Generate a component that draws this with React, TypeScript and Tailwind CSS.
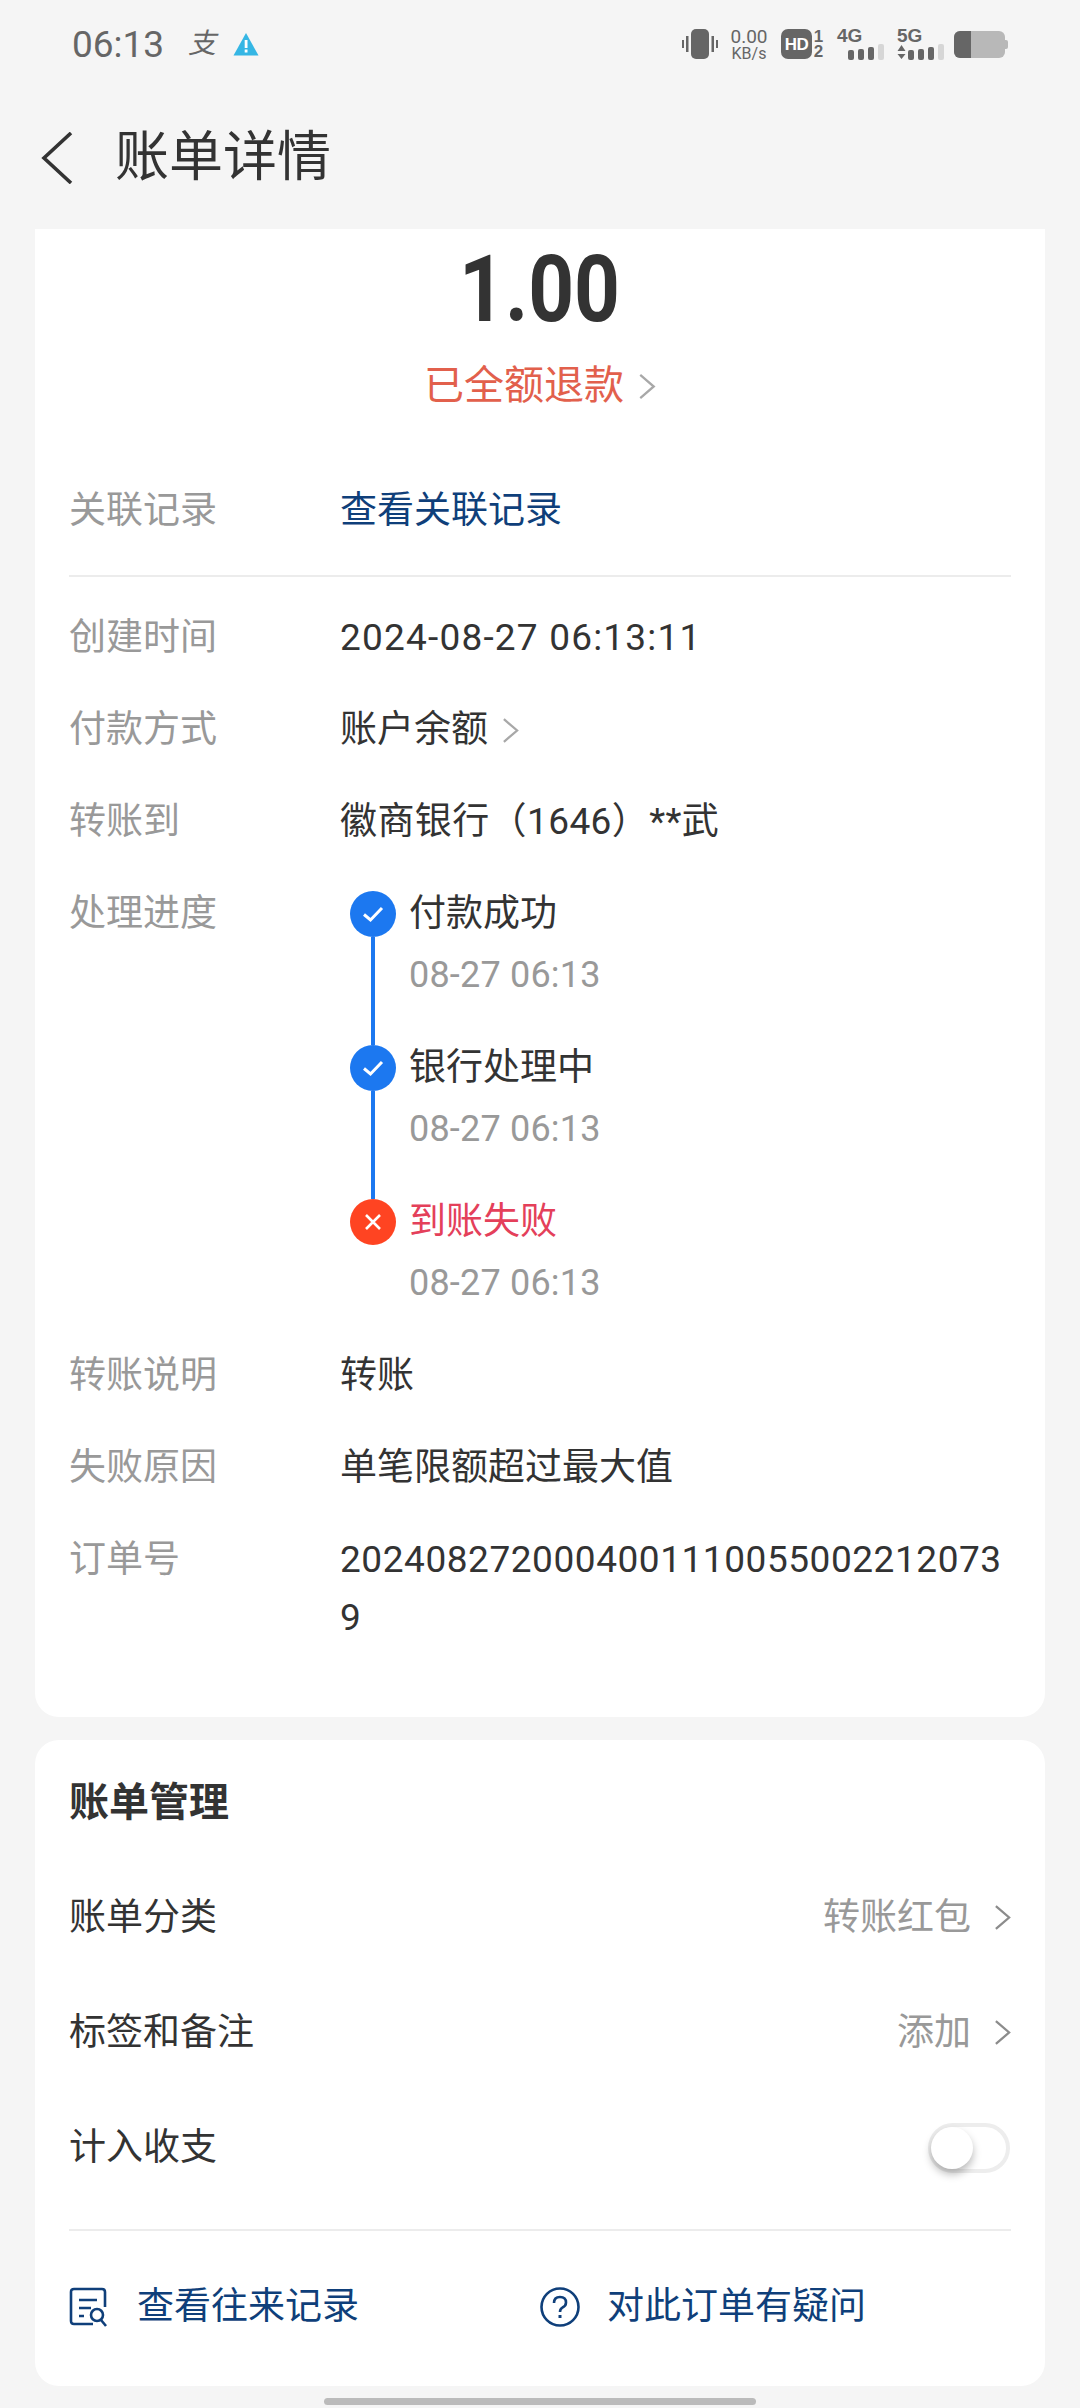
import React from 'react'

const font = "font-['Roboto','Noto_Sans_CJK_SC',sans-serif]"

function Chevron({ className }: { className: string }) {
  return (
    <svg viewBox="0 0 18 28" fill="none" className={className}>
      <path d="M2 2 L16 14 L2 26" stroke="currentColor" strokeWidth="2.4" />
    </svg>
  )
}

function Row({ label, children }: { label: string; children: React.ReactNode }) {
  return (
    <div className="flex pb-[34px]">
      <div className="w-[271px] shrink-0 text-[#999999]">{label}</div>
      <div className="min-w-0 flex-1 text-[#333333]">{children}</div>
    </div>
  )
}

function SignalBars() {
  return (
    <div className="flex items-end gap-[4px]">
      <div className="h-[10px] w-[6px] rounded-[2px] bg-[#666666]" />
      <div className="h-[11px] w-[6px] rounded-[2px] bg-[#666666]" />
      <div className="h-[13px] w-[6px] rounded-[2px] bg-[#666666]" />
      <div className="h-[16px] w-[6px] rounded-[2px] bg-[#d6d6d6]" />
    </div>
  )
}

function StatusBar() {
  return (
    <div className="flex h-[88px] items-center justify-between pl-[72px] pr-[72px] text-[#666666]">
      <div className="flex items-center">
        <span className="w-[116px] text-[37px] leading-none font-['Roboto',sans-serif]">06:13</span>
        <span className="w-[45px] text-[28px] leading-none italic">支</span>
        <svg viewBox="0 0 26 24" className="h-[24px] w-[26px]">
          <path d="M13 1 L25.5 23.5 L0.5 23.5 Z" fill="#35b6e4" />
          <rect x="11.7" y="8" width="2.8" height="8" fill="#fff" />
          <rect x="11.7" y="17.5" width="2.8" height="3" fill="#fff" />
        </svg>
      </div>
      <div className="flex items-center">
        <svg viewBox="0 0 36 30" className="h-[30px] w-[36px]">
          <rect x="9" y="0" width="18" height="30" rx="5" fill="#666" />
          <rect x="0" y="11" width="2" height="8" fill="#666" />
          <rect x="4" y="7" width="2.5" height="16" fill="#666" />
          <rect x="29.5" y="7" width="2.5" height="16" fill="#666" />
          <rect x="34" y="11" width="2" height="8" fill="#666" />
        </svg>
        <div className="ml-[12px] flex w-[38px] flex-col items-center font-['Roboto',sans-serif]">
          <span className="text-[19px] leading-[18px]">0.00</span>
          <span className="text-[16px] leading-[15px]">KB/s</span>
        </div>
        <div className="ml-[13px] flex h-[30px] w-[31px] items-center justify-center rounded-[7px] bg-[#666666] text-[17px] leading-none font-bold tracking-[-0.5px] text-white font-['Liberation_Sans',sans-serif]">
          HD
        </div>
        <div className="ml-[1px] flex w-[11px] flex-col items-center text-[17px] leading-[15px] font-bold font-['Liberation_Sans',sans-serif]">
          <span>1</span>
          <span>2</span>
        </div>
        <div className="ml-[13px] flex h-[30px] w-[47px] flex-col">
          <span className="text-[19px] leading-[14px] font-bold font-['Liberation_Sans',sans-serif]">4G</span>
          <div className="mt-[1px] flex justify-end"><SignalBars /></div>
        </div>
        <div className="ml-[13px] flex h-[30px] w-[47px] flex-col">
          <span className="text-[19px] leading-[14px] font-bold font-['Liberation_Sans',sans-serif]">5G</span>
          <div className="mt-[1px] flex items-end justify-between">
            <svg viewBox="0 0 9 16" className="h-[16px] w-[9px]">
              <path d="M4.5 1 L8.5 7 L0.5 7 Z M0.5 10 L8.5 10 L4.5 15 Z" fill="#666" />
            </svg>
            <SignalBars />
          </div>
        </div>
        <div className="ml-[10px] flex items-center">
          <div className="flex h-[27px] w-[51px] overflow-hidden rounded-[6px] bg-[#b8b8b8]">
            <div className="h-full w-[17px] bg-[#666666]" />
          </div>
          <div className="h-[9px] w-[3px] rounded-r-[2px] bg-[#b8b8b8]" />
        </div>
      </div>
    </div>
  )
}

const steps = [
  { title: '付款成功', failed: false },
  { title: '银行处理中', failed: false },
  { title: '到账失败', failed: true },
]

function Timeline() {
  return (
    <div className="ml-[10px] mt-[6px] mb-[5px]">
      {steps.map((s, i) => (
        <div key={i} className="flex">
          <div className="flex w-[46px] shrink-0 flex-col items-center">
            <div className={`flex h-[46px] w-[46px] items-center justify-center rounded-full ${s.failed ? 'bg-[#ff4422]' : 'bg-[#1c78f0]'}`}>
              {s.failed ? (
                <svg viewBox="0 0 20 20" className="h-[20px] w-[20px]" fill="none">
                  <path d="M3 3 L17 17 M17 3 L3 17" stroke="#fff" strokeWidth="2.6" />
                </svg>
              ) : (
                <svg viewBox="0 0 22 18" className="h-[18px] w-[22px]" fill="none">
                  <path d="M2 9.5 L8.5 15 L20 3" stroke="#fff" strokeWidth="3" />
                </svg>
              )}
            </div>
            {i < 2 && <div className="w-[4px] flex-1 bg-[#1c78f0]" />}
          </div>
          <div className={`ml-[13px] ${i < 2 ? 'h-[154px]' : ''}`}>
            <div className={`leading-[46px] ${s.failed ? 'text-[#e4405a]' : 'text-[#333333]'}`}>{s.title}</div>
            <div className="mt-[13px] text-[36px] leading-[50px] tracking-[0.2px] text-[#999999]">08-27 06:13</div>
          </div>
        </div>
      ))}
    </div>
  )
}

export default function App() {
  return (
    <div className={`h-[2408px] overflow-hidden bg-[#f5f5f5] ${font} text-[37px] leading-[58px]`}>
      <StatusBar />

      <div className="flex h-[141px] items-center pb-[2px] pl-[41px]">
        <svg viewBox="0 0 32 52" fill="none" className="h-[52px] w-[32px] text-[#333333]">
          <path d="M30 1 L3 26 L30 51" stroke="currentColor" strokeWidth="3.6" />
        </svg>
        <h1 className="ml-[42px] text-[54px] leading-none font-normal text-[#333333]">账单详情</h1>
      </div>

      <div className="mx-[35px] rounded-b-[24px] bg-white px-[34px] pb-[70px] pt-[11px]">
        <div className="flex justify-center">
          <span className="origin-center scale-x-[0.87] text-[92px] leading-[100px] font-bold text-[#333333]">1.00</span>
        </div>
        <div className="mb-[68px] mt-[18px] flex items-center justify-center text-[40px] leading-[56px] text-[#e2604c]">
          <span>已全额退款</span>
          <Chevron className="ml-[14px] h-[27px] w-[18px] text-[#a8a8a8]" />
        </div>

        <div className="flex pb-[35px]">
          <div className="w-[271px] shrink-0 text-[#999999]">关联记录</div>
          <div className="text-[#0f3f7a]">查看关联记录</div>
        </div>
        <div className="mb-[32px] h-[2px] bg-[#ececec]" />

        <Row label="创建时间"><span className="tracking-[1.2px]">2024-08-27 06:13:11</span></Row>
        <Row label="付款方式">
          <span className="flex items-center">
            账户余额
            <Chevron className="ml-[14px] h-[27px] w-[17px] text-[#a8a8a8]" />
          </span>
        </Row>
        <Row label="转账到"><span className="tracking-[0.4px]">徽商银行（1646）**武</span></Row>
        <div className="flex">
          <div className="w-[271px] shrink-0 text-[#999999]">处理进度</div>
          <Timeline />
        </div>
        <div className="h-[34px]" />
        <Row label="转账说明">转账</Row>
        <Row label="失败原因">单笔限额超过最大值</Row>
        <div className="flex">
          <div className="w-[271px] shrink-0 text-[#999999]">订单号</div>
          <div className="min-w-0 flex-1 break-all tracking-[0.55px] text-[#333333]">20240827200040011100550022120739</div>
        </div>
      </div>

      <div className="mx-[35px] mt-[23px] h-[646px] rounded-[24px] bg-white px-[34px] pt-[34px] text-[#333333]">
        <div className="text-[40px] font-bold">账单管理</div>
        <div className="mt-[28px] flex h-[115px] items-center justify-between">
          <span>账单分类</span>
          <span className="flex items-center text-[#999999]">
            转账红包
            <Chevron className="ml-[23px] h-[27px] w-[17px] text-[#8c8c8c]" />
          </span>
        </div>
        <div className="flex h-[115px] items-center justify-between">
          <span>标签和备注</span>
          <span className="flex items-center text-[#999999]">
            添加
            <Chevron className="ml-[23px] h-[27px] w-[17px] text-[#8c8c8c]" />
          </span>
        </div>
        <div className="flex h-[115px] items-center justify-between">
          <span>计入收支</span>
          <div className="mr-[1px] h-[50px] w-[82px] rounded-full border-[4px] border-[#ededed] bg-white">
            <div className="ml-[-1px] h-[42px] w-[42px] rounded-full bg-white shadow-[0_5px_8px_rgba(0,0,0,0.28)]" />
          </div>
        </div>
        <div className="mt-[24px] h-[2px] bg-[#ececec]" />
        <div className="grid h-[148px] grid-cols-2 items-center pt-[4px] text-[#0f3f7a]">
          <div className="flex items-center">
            <svg viewBox="0 0 38 40" fill="none" className="h-[40px] w-[38px]">
              <path d="M24 37 L5 37 Q2 37 2 34 L2 5 Q2 2 5 2 L33 2 Q36 2 36 5 L36 20" stroke="currentColor" strokeWidth="2.6" />
              <path d="M10 13 L28 13 M10 21 L22 21 M10 29 L15 29" stroke="currentColor" strokeWidth="2.6" />
              <circle cx="28" cy="28" r="6" stroke="currentColor" strokeWidth="2.6" />
              <path d="M32 33 L37 39" stroke="currentColor" strokeWidth="2.6" />
            </svg>
            <span className="ml-[30px]">查看往来记录</span>
          </div>
          <div className="flex items-center">
            <svg viewBox="0 0 40 40" fill="none" className="h-[40px] w-[40px]">
              <circle cx="20" cy="20" r="18.5" stroke="currentColor" strokeWidth="2.6" />
              <path d="M14 16 Q14 10 20 10 Q26 10 26 15.5 Q26 19 22.5 20.5 Q20 22 20 25" stroke="currentColor" strokeWidth="2.6" />
              <rect x="18.5" y="28" width="3" height="3" fill="currentColor" />
            </svg>
            <span className="ml-[27px]">对此订单有疑问</span>
          </div>
        </div>
      </div>

      <div className="mx-auto mt-[12px] h-[7px] w-[432px] rounded-full bg-[#bbbbbb]" />
    </div>
  )
}
